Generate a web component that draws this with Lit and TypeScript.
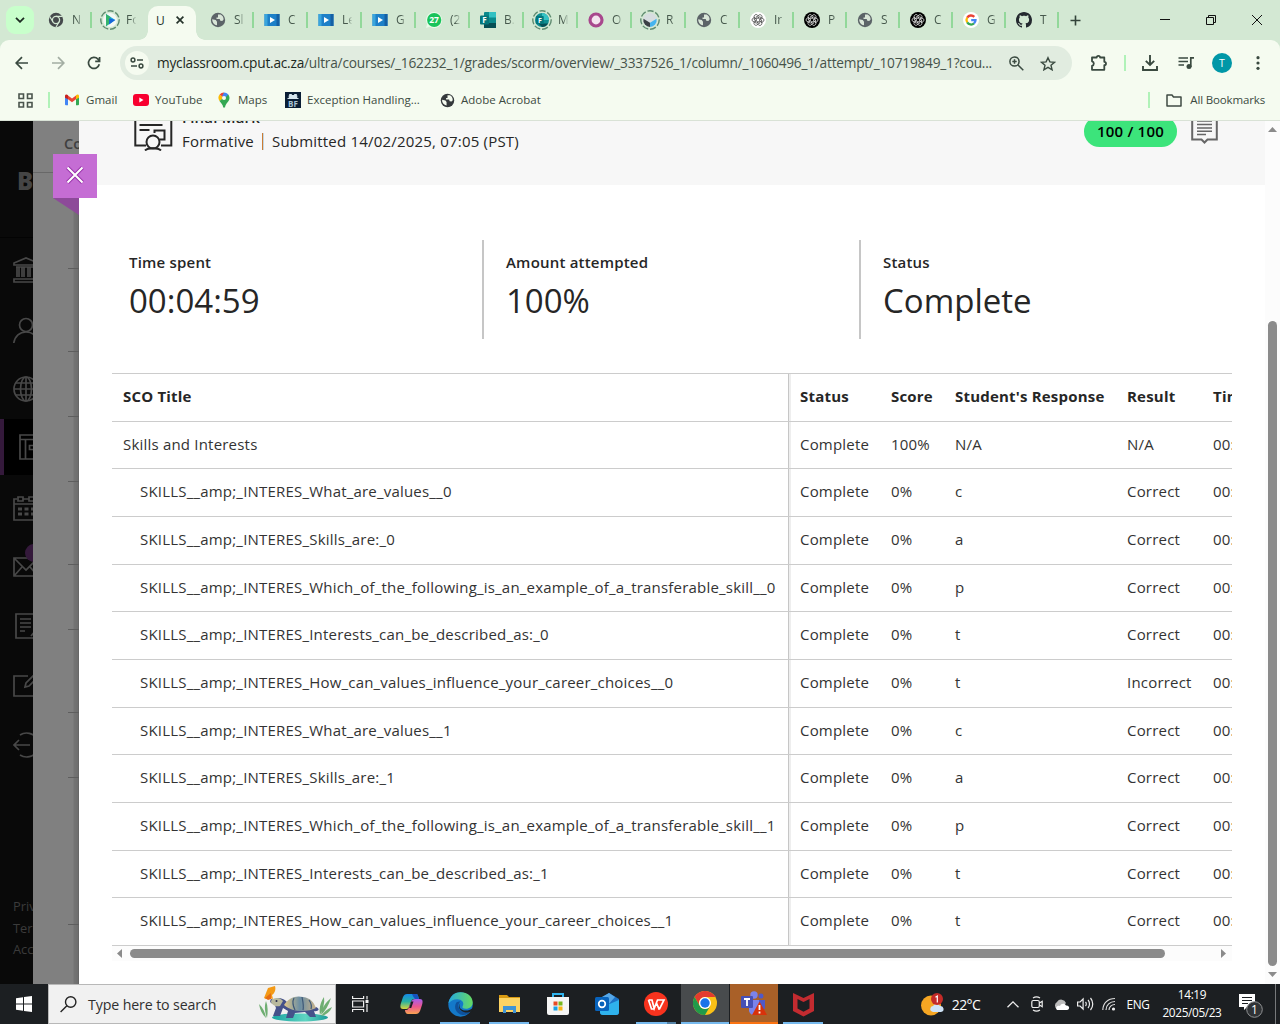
import { LitElement, html, css, svg, nothing } from "lit";
import { customElement } from "lit/decorators.js";
import { classMap } from "lit/directives/class-map.js";
import { styleMap } from "lit/directives/style-map.js";

const knot = (fg: string, bg: string) => svg`
  <circle cx="8" cy="8" r="8" fill=${bg}/>
  <g fill="none" stroke=${fg} stroke-width=".85" transform="translate(1 1) scale(.875)">
    ${[0, 60, 120, 180, 240, 300].map(
      (a) => svg`<path transform="rotate(${a} 8 8)" d="M8 5.6V3.900a2.300 2.300 0 0 1 3.400-1.700c1.200.7 1.500 2 1 3.100M5.900 6.800V4.400L8.800 2.800"/>`
    )}
    <path d="M8 5.7l2 1.150v2.300l-2 1.150-2-1.150v-2.300z"/>
  </g>`;

const globe = (c: string, land: string) => svg`
  <circle cx="8" cy="8" r="7.200" fill=${c}/>
  <path d="M2.200 7.200l3.600.9 1.200 1.600v3.600a5.600 5.600 0 0 1-4.800-6.100zM8 2.500h2.600c2 1 3 2.700 3 5.100l-1.300 1.500-2-.4-.6-1.700H6.500V5.400H8z" fill=${land}/>`;

const video = svg`
  <rect x=".5" y="2" width="15" height="12" fill="#1d80c8"/>
  <path d="M.5 2h3v12h-3z" fill="#3aa5dc"/><path d="M12.500 2h3v12h-3z" fill="#1560a4"/>
  <path d="M6 5l5 3-5 3z" fill="#fff"/>`;

const forms = svg`
  <rect x="4" y="0" width="12" height="16" rx="1" fill="#0b8a8c"/>
  <rect x="9" y="0" width="7" height="5.500" fill="#33c1c3"/>
  <rect x="4" y="11" width="12" height="5" fill="#064f55"/>
  <rect x="0" y="3.500" width="9" height="9" rx="1" fill="#04777c"/>
  <text x="2.300" y="11" font-size="8" font-weight="700" fill="#fff">F</text>`;

const formsRound = svg`
  <circle cx="8" cy="8" r="8" fill="#0f8f92"/><path d="M8 0a8 8 0 0 1 8 8H8z" fill="#35c3c5"/><path d="M8 16a8 8 0 0 0 7-4H4z" fill="#064f55"/>
  <rect x="1" y="3.500" width="9" height="9" rx="1" fill="#04777c"/>
  <text x="3.300" y="11" font-size="8" font-weight="700" fill="#fff">F</text>`;

const dashed = svg`<circle cx="10" cy="10" r="9.200" fill="none" stroke="#5f8b70" stroke-width="1.400" stroke-dasharray="6.200 1.900"/>`;

const fav: Record<string, unknown> = {
  chrome: svg`<circle cx="8" cy="8" r="7.200" fill="#45494c"/><circle cx="8" cy="8" r="3.600" fill="none" stroke="#d3e8d3" stroke-width="1.300"/>
    <path d="M8 4.400h6.500M4.900 9.800L1.700 4.500M11.100 9.800l-3.200 5.400" stroke="#d3e8d3" stroke-width="1.200" fill="none"/>`,
  play: svg`<circle cx="8" cy="8" r="8" fill="#f3f8f4"/><path d="M3.500 1l10.500 7-10.500 7z" fill="#18a9e6"/><path d="M3.500 1l5 3.500V11l-5 4z" fill="#35b56a"/><path d="M7 6l7 2-7 5z" fill="#1766d8"/>`,
  globe: globe("#5c6468", "#d9e6d8"),
  video,
  whats: svg`<path d="M8 0a8 8 0 1 1-4.200 14.800L0 16l1.200-3.900A8 8 0 0 1 8 0z" fill="#e9fbe9"/><circle cx="8.200" cy="8" r="7.100" fill="#19c35a"/>
    <text x="8.100" y="11" text-anchor="middle" font-size="8.500" font-weight="700" fill="#fff">27</text>`,
  forms,
  formsRound,
  ring: svg`<circle cx="8" cy="8" r="6" fill="#f4e4ef" stroke="#a8478d" stroke-width="3.200"/>`,
  sphere: svg`<circle cx="8" cy="8" r="8" fill="#d7dde0"/><path d="M.500 6.500L8 11v5A8 8 0 0 1 .500 6.500z" fill="#3b4045"/><path d="M15.500 6.500L8 11v5a8 8 0 0 0 7.500-9.500z" fill="#45b4ee"/>`,
  gptLight: knot("#444", "#fff"),
  gptDark: knot("#eee", "#000"),
  google: svg`<circle cx="8" cy="8" r="8" fill="#fff"/><g fill="none" stroke-width="2.300">
    <path d="M4.200 5.600A4.500 4.500 0 0 1 11.300 4.900" stroke="#ea4335"/><path d="M4.200 10.400a4.600 4.600 0 0 1 0-4.800" stroke="#fbbc05"/>
    <path d="M11 11.400a4.500 4.500 0 0 1-6.800-1" stroke="#34a853"/><path d="M8.200 8.200h4.300a4.500 4.500 0 0 1-1.500 3.200" stroke="#4285f4"/></g>`,
  github: svg`<path fill="#24292f" d="M8 0C3.580 0 0 3.580 0 8c0 3.540 2.290 6.530 5.470 7.590.4.070.55-.17.55-.38 0-.19-.01-.82-.01-1.490-2.010.37-2.530-.49-2.690-.94-.09-.23-.48-.94-.82-1.130-.28-.15-.68-.52-.01-.53.63-.01 1.080.58 1.230.82.72 1.210 1.870.87 2.330.66.07-.52.28-.87.51-1.070-1.780-.2-3.640-.89-3.640-3.950 0-.87.31-1.590.82-2.150-.08-.2-.36-1.020.08-2.120 0 0 .67-.21 2.200.82.64-.18 1.320-.27 2-.27s1.360.09 2 .27c1.530-1.040 2.200-.82 2.200-.82.44 1.100.16 1.920.08 2.120.51.56.82 1.270.82 2.150 0 3.070-1.870 3.750-3.650 3.950.29.25.54.73.54 1.480 0 1.070-.01 1.930-.01 2.200 0 .21.15.46.55.38A8.010 8.010 0 0 0 16 8c0-4.420-3.580-8-8-8z"/>`,
};

const tabs: { t: string; i: string; ring?: boolean; w?: number; active?: boolean }[] = [
  { t: "N", i: "chrome" },
  { t: "Fo", i: "play", ring: true },
  { t: "U", i: "", active: true },
  { t: "Sl", i: "globe" },
  { t: "C", i: "video" },
  { t: "Le", i: "video" },
  { t: "G", i: "video" },
  { t: "(2", i: "whats" },
  { t: "B.", i: "forms" },
  { t: "M", i: "formsRound", ring: true },
  { t: "O", i: "ring" },
  { t: "R", i: "sphere", ring: true },
  { t: "C", i: "globe" },
  { t: "Ir", i: "gptLight" },
  { t: "P", i: "gptDark", w: 53 },
  { t: "S", i: "globe", w: 53 },
  { t: "C", i: "gptDark", w: 53 },
  { t: "G", i: "google", w: 53 },
  { t: "T", i: "github", w: 53 },
];

@customElement("browser-chrome")
class BrowserChrome extends LitElement {
  static styles = css`
    :host { display: block; height: 121px; background: #d3e8d3; font-family: "Open Sans", "Noto Sans", sans-serif; color: #3c4a41; }
    svg { display: block; flex: none; }
    .strip { display: flex; height: 40px; align-items: center; }
    .drop { width: 28px; height: 28px; border-radius: 9px; background: #c8ffcb; margin: 0 4px 0 6px; display: grid; place-items: center; }
    .tab { width: 54px; height: 16px; box-sizing: border-box; border-right: 2px solid #92d89a; display: flex; align-items: center; padding-left: 10px; }
    .tab.w53 { width: 53px; }
    .tab.bare { border-color: transparent; }
    .ico { width: 16px; display: grid; place-items: center; }
    .ico svg { margin: 0 -2px; }
    .lbl { margin-left: 8px; width: 10px; overflow: hidden; white-space: nowrap; font-size: 12px; line-height: 16px; color: #46584c;
      -webkit-mask-image: linear-gradient(90deg, #000 50%, transparent 105%); }
    .tab.active { width: 66px; height: 34px; margin: 6px -6px 0 -6px; padding: 0; border: 0; align-self: flex-end; flex: none; }
    .active-in { width: 48px; height: 34px; background: #f5fbf0; border-radius: 10px 10px 0 0; margin: 0 auto; display: flex; align-items: center; gap: 12px; padding: 0 0 6px 8px; box-sizing: border-box; font-size: 12px; color: #26332b; position: relative; left: -1px; }
    .active-in::before, .active-in::after { content: ""; position: absolute; bottom: 0; width: 9px; height: 9px; }
    .active-in::before { left: -9px; background: radial-gradient(circle at 0 0, transparent 8.500px, #f5fbf0 9px); }
    .active-in::after { right: -9px; background: radial-gradient(circle at 100% 0, transparent 8.500px, #f5fbf0 9px); }
    .u { width: 8px; }
    .plus { margin-left: 11px; }
    .win { margin-left: auto; display: flex; }
    .win span { width: 46px; display: grid; place-items: center; }
    .tools { background: #f5fbf0; border-radius: 9px 9px 0 0; height: 46px; display: flex; align-items: center; padding: 0 4px; box-sizing: border-box; }
    .btn { width: 36px; display: grid; place-items: center; flex: none; }
    .omni { margin: 0 8px; height: 34px; border-radius: 17px; background: #e1ece0; flex: 1; min-width: 0; display: flex; align-items: center; padding: 0 8px 0 5px; }
    .site { width: 24px; height: 24px; border-radius: 50%; background: #f5fbf0; display: grid; place-items: center; margin-right: 8px; flex: none; }
    .url { flex: 1; white-space: nowrap; font-size: 13.700px; letter-spacing: -0.230px; color: #46534a; min-width: 0; padding-bottom: 2px; }
    .url b { font-weight: 400; color: #1c2820; }
    .small { width: 32px; display: grid; place-items: center; flex: none; }
    .sep { width: 2px; height: 16px; background: #b0f2b8; margin: 0 7px; flex: none; }
    .sep.first { margin: 0 14px 0 15px; }
    .btn.ext { padding-left: 2px; box-sizing: border-box; }
    .sep.mid { margin: 0 6px 0 8px; }
    .ava { width: 20px; height: 20px; border-radius: 50%; background: #0097a7; color: #fff; font-size: 10.500px; display: grid; place-items: center; }
    .marks { background: #f5fbf0; height: 28px; padding: 0 15px 6px 18px; border-bottom: 1px solid #d9e2d6; display: flex; align-items: center; font-size: 11.500px; letter-spacing: 0.020px; }
    .mark { display: flex; align-items: center; gap: 6px; white-space: nowrap; flex: none; }
    .mark span { line-height: 16px; padding-bottom: 1px; }
    .mark .sep { padding: 0; }
    .m1 { width: 69px; } .m2 { width: 85px; } .m3 { width: 67px; gap: 8px; } .m4 { width: 155px; }
    .all { margin-left: auto; letter-spacing: -0.150px; gap: 7px; }
    .all .sep { margin: 0 9px 0 0; }
  `;

  render() {
    return html`
      <div class="strip">
        <div class="drop"><svg width="10" height="6" viewBox="0 0 10 6"><path d="M1 .8l4 4 4-4" fill="none" stroke="#1d2b22" stroke-width="1.800"/></svg></div>
        ${tabs.map((tab, n) =>
          tab.active
            ? html`<div class="tab active"><div class="active-in"><span class="u">${tab.t}</span>
                <svg width="8" height="8" viewBox="0 0 8 8"><path d="M.6.600l6.800 6.800M7.400.600L.6 7.400" stroke="#26332b" stroke-width="1.700"/></svg></div></div>`
            : html`<div class=${classMap({ tab: true, w53: tab.w === 53, bare: n === 1 })}>
                <span class="ico">${tab.ring
                  ? html`<svg width="20" height="20" viewBox="0 0 20 20">${dashed}<g transform="translate(3 3) scale(.875)">${fav[tab.i]}</g></svg>`
                  : html`<svg width="16" height="16" viewBox="0 0 16 16">${fav[tab.i]}</svg>`}</span>
                <span class="lbl">${tab.t}</span></div>`
        )}
        <svg class="plus" width="11" height="11" viewBox="0 0 11 11"><path d="M5.500.5v10M.5 5.500h10" stroke="#33443a" stroke-width="1.600"/></svg>
        <div class="win">
          <span><svg width="10" height="10" viewBox="0 0 10 10"><path d="M0 4.500h10" stroke="#111"/></svg></span>
          <span><svg width="10" height="10" viewBox="0 0 10 10"><path d="M.5 2.500h7v7h-7zM2.500 2.500v-2h7v7h-2" fill="none" stroke="#111"/></svg></span>
          <span><svg width="10" height="10" viewBox="0 0 10 10"><path d="M0 0l10 10M10 0L0 10" stroke="#111"/></svg></span>
        </div>
      </div>
      <div class="tools">
        <span class="btn"><svg width="14" height="14" viewBox="0 0 14 14"><path d="M13 7H1.500M7 1.200L1.200 7 7 12.800" fill="none" stroke="#3a4a40" stroke-width="1.700"/></svg></span>
        <span class="btn"><svg width="14" height="14" viewBox="0 0 14 14"><path d="M1 7h11.500M7 1.200L12.800 7 7 12.800" fill="none" stroke="#a3aea3" stroke-width="1.700"/></svg></span>
        <span class="btn"><svg width="14" height="14" viewBox="0 0 14 14"><path d="M12.300 8.300A5.500 5.500 0 1 1 11 3.200l1.500 1.600M12.600 1v4.400H8.200" fill="none" stroke="#3a4a40" stroke-width="1.700"/></svg></span>
        <div class="omni">
          <span class="site"><svg width="14" height="12" viewBox="0 0 14 12"><g fill="none" stroke="#3a4a40" stroke-width="1.500"><circle cx="3" cy="3" r="1.900"/><path d="M7 3h6M1 9h6"/><circle cx="11" cy="9" r="1.900"/></g></svg></span>
          <span class="url"><b>myclassroom.cput.ac.za</b>/ultra/courses/_162232_1/grades/scorm/overview/_3337526_1/column/_1060496_1/attempt/_10719849_1?cou...</span>
          <span class="small"><svg width="15" height="15" viewBox="0 0 15 15"><g fill="none" stroke="#3a4a40" stroke-width="1.500"><circle cx="5.500" cy="5.500" r="4.600"/><path d="M9 9l5.300 5.300M3.300 5.500h4.400M5.500 3.300v4.400"/></g></svg></span>
          <span class="small"><svg width="16" height="15" viewBox="0 0 16 15"><path d="M8 1.700l1.900 4.200 4.600.4-3.500 3 1.100 4.500L8 11.400l-4.100 2.400L5 9.300l-3.500-3 4.600-.4z" fill="none" stroke="#3a4a40" stroke-width="1.400"/></svg></span>
        </div>
        <span class="btn ext"><svg width="18" height="18" viewBox="0 0 18 18"><path d="M2 3.500h4.700a1.700 1.700 0 0 1 3.400 0h4.200v4.300a1.700 1.700 0 0 1 0 3.400v4.600H2v-4a2.300 2.300 0 0 0 0-4.500z" fill="none" stroke="#3a4a40" stroke-width="1.800" stroke-linejoin="round"/></svg></span>
        <span class="sep mid"></span>
        <span class="btn"><svg width="16" height="16" viewBox="0 0 16 16"><path d="M8 0v10M3.800 5.800L8 10l4.200-4.200M1 11v4h14v-4" fill="none" stroke="#3a4a40" stroke-width="1.900"/></svg></span>
        <span class="btn"><svg width="16" height="14" viewBox="0 0 16 14"><path d="M.5 2h9.500M.5 5.500h9.500M.5 9h5.500M12.800 11V1.800H16" fill="none" stroke="#3a4a40" stroke-width="1.700"/><circle cx="11" cy="10.500" r="2.500" fill="#3a4a40"/></svg></span>
        <span class="btn"><span class="ava">T</span></span>
        <span class="btn"><svg width="4" height="14" viewBox="0 0 4 14" fill="#3a4a40"><circle cx="2" cy="1.700" r="1.600"/><circle cx="2" cy="7" r="1.600"/><circle cx="2" cy="12.300" r="1.600"/></svg></span>
      </div>
      <div class="marks">
        <svg width="15" height="15" viewBox="0 0 15 15"><path d="M1 1h4.500v4.500H1zM9.500 1H14v4.500H9.500zM1 9.500h4.500V14H1zM9.500 9.500H14V14H9.500z" fill="none" stroke="#4a544d" stroke-width="1.600"/></svg>
        <span class="sep first"></span>
        <span class="mark m1"><svg width="16" height="12" viewBox="0 0 16 12"><path d="M1 2.500l3 2.200v6.600H2a1 1 0 0 1-1-1z" fill="#4285f4"/><path d="M15 2.500l-3 2.200v6.600h2a1 1 0 0 0 1-1z" fill="#34a853"/><path d="M4 1.500l4 3.100 4-3.100v3.700L8 8.300 4 5.200z" fill="#ea4335"/><path d="M1 3.800V2c0-1.500 1.700-2 3-.7v3.900z" fill="#c5221f"/><path d="M15 3.800V2c0-1.500-1.700-2-3-.7v3.900z" fill="#fbbc04"/></svg><span>Gmail</span></span>
        <span class="mark m2"><svg width="16" height="12" viewBox="0 0 16 12"><rect width="16" height="12" rx="3" fill="#f8002f"/><path d="M6.300 3.500l4.200 2.500-4.200 2.500z" fill="#fff"/></svg><span>YouTube</span></span>
        <span class="mark m3"><svg width="12" height="16" viewBox="0 0 12 16"><path d="M1.600 2.600A5.500 5.500 0 0 0 1.500 9L6 6z" fill="#fbbc04"/><path d="M6 .5A5.500 5.500 0 0 0 1.600 2.600L6 6z" fill="#ea4335"/><path d="M11.500 6c0 4-4 5-4.500 9.500H5.200C5 12.500 3 11 1.500 9L9.900 2.200c1 1 1.600 2.300 1.600 3.800z" fill="#34a853"/><path d="M6 .5a5.500 5.500 0 0 1 4.300 2.100L7 6 4.200 4z" fill="#4285f4"/><circle cx="6" cy="6" r="2" fill="#f5fbf0"/></svg><span>Maps</span></span>
        <span class="mark m4"><svg width="16" height="16" viewBox="0 0 16 16"><rect width="16" height="16" fill="#0a1e35"/><path d="M2.500 6.500h11M4 5.500l.5-3h2L8 4l1.500-1.500h2l.5 3z" fill="#d6e6ee" stroke="#d6e6ee"/><text x="8" y="14.500" text-anchor="middle" font-size="8" font-weight="700" fill="#a9c3d2">BF</text></svg><span>Exception Handling...</span></span>
        <span class="mark"><svg width="15" height="15" viewBox="0 0 16 16">${globe("#35393c", "#f5fbf0")}</svg><span>Adobe Acrobat</span></span>
        <span class="mark all"><span class="sep"></span><svg width="16" height="13" viewBox="0 0 16 13"><path d="M1 1h5l1.500 2H15v9H1z" fill="none" stroke="#3f4b43" stroke-width="1.500" stroke-linejoin="round"/></svg><span>&hairsp;All Bookmarks</span></span>
      </div>`;
  }
}

const navIcons = [
  svg`<path d="M1 8v-2L13 1l12 5v2zM3 10h20M4 10v10M9 10v10M11 10v10M15 10v10M17 10v10M22 10v10M6 10v10M1 25v-3h24v3z"/>`,
  svg`<circle cx="13" cy="8" r="6.500"/><path d="M.8 26c1-7 6-11 12.200-11s11 4 12 11"/>`,
  svg`<circle cx="13" cy="13" r="12"/><ellipse cx="13" cy="13" rx="5.500" ry="12"/><path d="M13 1v24M1 13h24M3 7h20M3 19h20"/>`,
  svg`<path d="M1 1h24v24H1zM1 5.500h24M6.500 5.500V25M10.500 11.500h9v4h-9z"/>`,
  svg`<path d="M4 4H1v21h24V4h-3M10 4h6M1 9h24M5 2h5v4H5zM16 2h5v4h-5z"/><path d="M5 14h16M5 19h16" stroke-width="3" stroke-dasharray="4 2.500"/>`,
  svg`<path d="M1 4h24v18H1zM1 4l12 12L25 4M1 22l8-9M25 22l-8-9"/>`,
  svg`<path d="M20 25H3V1h20v14M7 6h11M7 10h11M7 14h11M7 18h5M18 23l6-7"/>`,
  svg`<path d="M15 3H1v20h20V12M12 14l1-4 9-9 3 3-9 9z"/>`,
  svg`<path d="M17 13H1M6 8l-5 5 5 5M7 3a12 12 0 0 1 17 4M7 23a12 12 0 0 0 17-4"/>`,
];

@customElement("course-backdrop")
class CourseBackdrop extends LitElement {
  static styles = css`
    :host { display: flex; height: 863px; font-family: "Open Sans", sans-serif; }
    .nav { width: 33px; background: #090909; overflow: hidden; display: flex; flex-direction: column; color: #454545; }
    .brand { height: 117px; flex: none; border-bottom: 1px solid #030303; box-sizing: border-box; padding: 44px 0 0 17px; font: 800 24px/32px "Open Sans", sans-serif; }
    .items { padding-top: 3px; }
    .item { height: 59.300px; box-sizing: border-box; display: flex; align-items: center; position: relative; padding: 0 0 0.400px 13px; }
    .on::before { content: ""; position: absolute; inset: 0 0 3.200px 0; background: #000; border-left: 4px solid #34193b; }
    .on { padding: 0 0 3px 19px; }
    .item svg { flex: none; position: relative; }
    .dot { position: absolute; left: 25px; top: 7px; width: 18px; height: 18px; border-radius: 50%; background: #34193b; }
    .foot { margin-top: auto; padding: 0 0 23px 13px; font-size: 12.800px; line-height: 21.600px; white-space: nowrap; color: #3b3b3b; }
    .under { width: 46px; background: linear-gradient(90deg, #808080 40px, #747474 41px, #6e6e6e 45px, #606060 46px); overflow: hidden; }
    .head { height: 52px; border-bottom: 1px solid #686868; box-sizing: border-box; padding: 11px 0 0 31px; font: 600 14.500px/23px "Open Sans", sans-serif; color: #3f3f3f; background: #808080; }
    .ticks { display: flex; flex-direction: column; padding-left: 35px; }
    .tick { box-sizing: border-box; border-bottom: 1px solid #5e5e5e; }
  `;
  render() {
    const gaps = [96, 83, 65, 65, 83, 65, 83, 65, 147];
    return html`
      <div class="nav">
        <div class="brand">B</div>
        <div class="items">
          ${navIcons.map((p, n) => html`<div class=${classMap({ item: true, on: n === 3 })}>
            <svg width="26" height="26" viewBox="0 0 26 26" fill="none" stroke="#484848" stroke-width="1.700">${p}</svg>
            ${n === 5 ? html`<span class="dot"></span>` : nothing}</div>`)}
        </div>
        <div class="foot">Privacy<br />Terms<br />Accessibility</div>
      </div>
      <div class="under">
        <div class="head">Co</div>
        <div class="ticks">${gaps.map((g) => html`<div class="tick" style=${styleMap({ height: g + "px" })}></div>`)}</div>
      </div>`;
  }
}

const rows: string[][] = [
  ["Skills and Interests", "100%", "N/A", "N/A"],
  ["SKILLS__amp;_INTERES_What_are_values__0", "0%", "c", "Correct"],
  ["SKILLS__amp;_INTERES_Skills_are:_0", "0%", "a", "Correct"],
  ["SKILLS__amp;_INTERES_Which_of_the_following_is_an_example_of_a_transferable_skill__0", "0%", "p", "Correct"],
  ["SKILLS__amp;_INTERES_Interests_can_be_described_as:_0", "0%", "t", "Correct"],
  ["SKILLS__amp;_INTERES_How_can_values_influence_your_career_choices__0", "0%", "t", "Incorrect"],
  ["SKILLS__amp;_INTERES_What_are_values__1", "0%", "c", "Correct"],
  ["SKILLS__amp;_INTERES_Skills_are:_1", "0%", "a", "Correct"],
  ["SKILLS__amp;_INTERES_Which_of_the_following_is_an_example_of_a_transferable_skill__1", "0%", "p", "Correct"],
  ["SKILLS__amp;_INTERES_Interests_can_be_described_as:_1", "0%", "t", "Correct"],
  ["SKILLS__amp;_INTERES_How_can_values_influence_your_career_choices__1", "0%", "t", "Correct"],
];

@customElement("attempt-panel")
class AttemptPanel extends LitElement {
  static styles = css`
    :host { display: flex; height: 863px; background: #fff; font-family: "Open Sans", "Noto Sans", sans-serif; color: #262626; font-size: 15px; letter-spacing: 0.200px; }
    svg { display: block; flex: none; }
    .main { width: 1186px; }
    .head { height: 64px; background: #f7f7f7; overflow: hidden; display: flex; align-items: flex-start; }
    .badge { margin: -10px 0 0 55px; }
    .titles { margin: -15px 0 0 9px; line-height: 24px; white-space: nowrap; flex: 1; }
    .title { font-weight: 600; height: 23px; line-height: 22px; }
    .sub { display: flex; align-items: center; }
    .bar { width: 1px; height: 17px; background: #cb7c34; border-right: 1px solid #c3d7e3; margin: 0 8px 0 8px; }
    .pill { margin-top: -5px; width: 93px; height: 31px; border-radius: 16px; background: #3ce47b; color: #000; font-weight: 600; line-height: 31px; text-align: center; }
    .note { margin: -5px 47px 0 14px; }
    .stats { display: grid; grid-template-columns: repeat(3, 377px); padding: 55px 0 0 26px; }
    .stat { height: 99px; box-sizing: border-box; padding: 10px 0 0 22px; border-left: 2px solid #c6c6c6; }
    .stat:first-child { border-color: transparent; }
    .k { font-weight: 600; line-height: 25px; }
    .v { font-size: 33px; line-height: 52px; letter-spacing: 0; }
    .table { width: 1120px; margin: 34px 0 0 33px; overflow: hidden; border-top: 1px solid #ccc; }
    .row { display: grid; grid-template-columns: 676px 103px 64px 172px 86px 60px; height: 47.667px; box-sizing: border-box; border-bottom: 1px solid #ccc; line-height: 44px; white-space: nowrap; width: 1161px; color: #333; }
    .row > :first-child { padding-left: 11px; }
    .row.deep > :first-child { padding-left: 28px; }
    .row > :nth-child(2) { border-left: 1px solid #c6c6c6; box-shadow: inset 2px 0 0 #eee; padding-left: 11px; }
    .row.hd { font-weight: 700; color: #262626; }
    .hs { width: 1120px; margin-left: 33px; height: 15px; background: #fcfcfc; display: flex; align-items: center; box-sizing: border-box; padding: 0 5px; }
    .hs i { display: block; width: 1035px; height: 9px; border-radius: 5px; background: #8b8b8b; margin: 0 56px 0 8px; }
    .vs { width: 15px; background: #fcfcfc; display: flex; flex-direction: column; align-items: center; padding: 6px 0 7px; box-sizing: border-box; }
    .vs i { display: block; width: 9px; height: 645px; border-radius: 5px; background: #8b8b8b; margin: 189px 0 6px; }
  `;
  render() {
    return html`
      <div class="main">
        <div class="head">
          <svg class="badge" width="39" height="40" viewBox="0 0 39 40" fill="none" stroke="#262626" stroke-width="2"><path d="M12 34.500H1.300V2h36v32.500H27M5.500 14h23M5.500 19h10M20.500 22v-2.500h10v9h-5"/><circle cx="19" cy="31" r="6.500" fill="#f7f7f7"/><path d="M11 39.500c2-2 5-2.200 8-2.200s6 .2 8 2.200"/></svg>
          <div class="titles">
            <div class="title">Final Mark</div>
            <div class="sub">Formative<span class="bar"></span>Submitted 14/02/2025, 07:05 (PST)</div>
          </div>
          <div class="pill">100 / 100</div>
          <svg class="note" width="27" height="28" viewBox="0 0 27 28" fill="none" stroke="#666" stroke-width="1.800"><path d="M1.200 1h24.600v22.500H16.500L13.500 26.500l-3-3H1.200z" stroke-width="2"/><path d="M6 5h15M6 8.500h15M6 12h15M6 15.200h15M6 18.500h9" stroke-width="1.600"/></svg>
        </div>
        <div class="stats">
          <div class="stat"><div class="k">Time spent</div><div class="v">00:04:59</div></div>
          <div class="stat"><div class="k">Amount attempted</div><div class="v">100%</div></div>
          <div class="stat"><div class="k">Status</div><div class="v">Complete</div></div>
        </div>
        <div class="table">
          <div class="row hd"><span>SCO Title</span><span>Status</span><span>Score</span><span>Student's Response</span><span>Result</span><span>Time</span></div>
          ${rows.map((r, n) => html`<div class=${classMap({ row: true, deep: n > 0 })}>
            <span>${r[0]}</span><span>Complete</span><span>${r[1]}</span><span>${r[2]}</span><span>${r[3]}</span><span>00:00</span></div>`)}
        </div>
        <div class="hs">
          <svg width="5" height="9" viewBox="0 0 5 9"><path d="M5 0v9L0 4.500z" fill="#8b8b8b"/></svg><i></i>
          <svg width="5" height="9" viewBox="0 0 5 9"><path d="M0 0v9l5-4.500z" fill="#8b8b8b"/></svg>
        </div>
      </div>
      <div class="vs">
        <svg width="9" height="5" viewBox="0 0 9 5"><path d="M0 5h9L4.500 0z" fill="#8b8b8b"/></svg><i></i>
        <svg width="9" height="5" viewBox="0 0 9 5"><path d="M0 0h9L4.500 5z" fill="#8b8b8b"/></svg>
      </div>`;
  }
}

const turtle = html`<svg width="76" height="36" viewBox="0 0 76 36">
  <defs>
    <linearGradient id="sh" x1="0" x2="1"><stop offset="0" stop-color="#e3c98a"/><stop offset=".5" stop-color="#6a8da3"/><stop offset="1" stop-color="#c9b28a"/></linearGradient>
    <linearGradient id="pd" x1="0" x2="1"><stop offset="0" stop-color="#1aa4a2"/><stop offset=".6" stop-color="#5fd5c2"/><stop offset="1" stop-color="#1b9a99"/></linearGradient>
  </defs>
  <ellipse cx="43" cy="31.500" rx="28" ry="4" fill="url(#pd)"/>
  <g fill="#6fae72"><path d="M2 18c4 4 6 8 7 14-4-4-6-8-7-14zM9 15c2 5 2 11 1 17-2-6-3-11-1-17zM74 12c-6 5-9 10-10 17 4-4 8-10 10-17zM67 11c-4 6-5 12-4 18 3-6 5-12 4-18zM75 21c-5 2-8 5-11 9 5-1 9-4 11-9z"/></g>
  <path d="M17 14c5-4 12-1 15 5l27 2c5 2 2 5-2 4l2 6h-6l-5-5-10 1-2 5h-7l2-7-5-3-3 8h-7l3-8-2-5c-3 1-5-1-3-4z" fill="#45528a"/>
  <path d="M14 15c2-4 9-4 12 0l-3 5c-4 1-9-1-9-5z" fill="#b8b99e"/><circle cx="19.500" cy="15" r="1" fill="#22284b"/>
  <path d="M27 19c4-7 12-10 19-8 8 1 11 6 13 11-8 4-23 5-32-3z" fill="url(#sh)"/>
  <path d="M37 12c-2 4-1 8 1 12M45 11c1 5 2 9 1 13M52 14c2 3 3 6 2 9" fill="none" stroke="#3d5878" stroke-width="1.200"/>
  <path d="M7 12l4-10 7-2c1 3 0 7-3 9l1 4-4-1-3 1z" fill="#f49a16"/><path d="M8 12l6-5v6l-3 1z" fill="#e66c13"/>
</svg>`;

const app: Record<string, unknown> = {
  task: html`<svg width="17" height="16" viewBox="0 0 17 16" fill="none" stroke="#eee" stroke-width="1.200"><path d="M.6 0v2.500h11V0M.6 16v-2.500h11V16M.6 5h11v6H.6zM15 0v3.500M15 8v8"/><path d="M13.500 4h3v3h-3z" fill="#eee" stroke="none"/></svg>`,
  copilot: html`<svg width="23" height="22" viewBox="0 0 23 22"><defs><linearGradient id="c1" x2="0" y2="1"><stop offset="0" stop-color="#1689e8"/><stop offset=".5" stop-color="#26b1a2"/><stop offset="1" stop-color="#d8d43c"/></linearGradient><linearGradient id="c2" x2="0" y2="1"><stop offset="0" stop-color="#a85dec"/><stop offset=".5" stop-color="#ec5790"/><stop offset="1" stop-color="#f9a451"/></linearGradient></defs><path d="M7 1h9c2 0 2 2 3 5h-5c-2 0-3 2-4 5l-1 3c-1 2-2 2-4 2H3c-3 0-3-3-2-6l2-6c1-2 2-3 4-3z" fill="url(#c1)"/><path d="M16 21H8c-2 0-3-2-3-4 2 0 3 0 4-3l2-5c1-2 2-3 4-3h5c3 0 3 3 2 6l-2 6c-1 2-2 3-4 3z" fill="url(#c2)"/><path d="M12 1h4c2 0 2 2 3 5h-4c-1-1-2-3-3-5z" fill="#1752bd"/><path d="M13.500 8.500l-2.300 6.500h-2l2-6.500z" fill="#1c1f22"/></svg>`,
  edge: html`<svg width="25" height="25" viewBox="0 0 24 24"><defs><linearGradient id="e1"><stop offset="0" stop-color="#25a9e0"/><stop offset="1" stop-color="#66db61"/></linearGradient></defs><circle cx="12" cy="12" r="11.700" fill="#1479c9"/><path d="M.4 11C2 3 7 .3 12 .3 19 .3 23.700 5 23.700 10c0 4-3 6-6.500 6-3 0-4-1-3-2.500C16 10 13 7 9 7 5 7 2 9 .4 11z" fill="url(#e1)"/><path d="M8 10c-3 5 0 11 6 12 3 .3 6-1 8-4-5 3-12 1-12-5 0-2 1-3 2-4-2 0-3 0-4 1z" fill="#0f529c"/><path d="M12 10.500c-1.500 2-1.500 5 1.500 6.500 3 1.500 7 1 10-1.500v3l-1.500.5c-5 2-10.500 0-11.500-4.500 0-2 .5-3 1.500-4z" fill="#1c2023"/></svg>`,
  folder: html`<svg width="23" height="20" viewBox="0 0 23 20"><path d="M1 1h8l2 2h11v5H1z" fill="#d99a12"/><path d="M1 4h21v14H1z" fill="#fcd363"/><path d="M5 19v-7h13v7h-3v-3H8v3z" fill="#3f94d6"/></svg>`,
  store: html`<svg width="24" height="24" viewBox="0 0 24 24"><path d="M7 6V2h10v4" fill="none" stroke="#30b4ee" stroke-width="2"/><path d="M1 5h22v16a2 2 0 0 1-2 2H3a2 2 0 0 1-2-2z" fill="#f5f5f5"/><path d="M7.500 9.500h4v4h-4z" fill="#e84b24"/><path d="M12.500 9.500h4v4h-4z" fill="#78b81c"/><path d="M7.500 14.500h4v4h-4z" fill="#18a1e5"/><path d="M12.500 14.500h4v4h-4z" fill="#f9b515"/></svg>`,
  outlook: html`<svg width="25" height="24" viewBox="0 0 25 24"><path d="M5 7l9-6 10 6v13a3 3 0 0 1-3 3H8a3 3 0 0 1-3-3z" fill="#1c72c5"/><path d="M5 16L24 8v12a3 3 0 0 1-3 3H8a3 3 0 0 1-3-3z" fill="#2fb2ec"/><path d="M5 6l9-5 6 4-8 9z" fill="#55a7e8"/><rect y="5" width="14" height="14" rx="1.500" fill="#0863bc"/><circle cx="7" cy="12" r="3.300" fill="none" stroke="#fff" stroke-width="1.700"/></svg>`,
  wps: html`<svg width="24" height="24" viewBox="0 0 24 24"><circle cx="12" cy="12" r="12" fill="#f8331e"/><path d="M4.500 8H8l2.200 8.500L13.500 8H20l-4.500 9H14M4.500 8l3 9h2.700M12.500 11l2.500 6" fill="none" stroke="#fff" stroke-width="1.700"/></svg>`,
  chrome: html`<svg width="24" height="24" viewBox="0 0 24 24"><circle cx="12" cy="12" r="12" fill="#fbc116"/><path d="M1.600 6A12 12 0 0 1 22.400 6H12a6 6 0 0 0-5.200 9z" fill="#e33b2e"/><path d="M1.600 6A12 12 0 0 0 12 24l5.200-9A6 6 0 0 1 6.800 15z" fill="#219a4a"/><circle cx="12" cy="12" r="6" fill="#fff"/><circle cx="12" cy="12" r="4.700" fill="#1b73e8"/></svg>`,
  teams: html`<svg width="26" height="24" viewBox="0 0 26 24"><circle cx="13" cy="4" r="3.700" fill="#7b83eb"/><circle cx="20" cy="5" r="2.500" fill="#5059c9"/><path d="M8 9h10v9a5 5 0 0 1-10 2z" fill="#7b83eb"/><path d="M18 9h6v7c0 3-3 5-6 4z" fill="#5059c9"/><rect y="5" width="12" height="12" rx="1" fill="#4650b6"/><path d="M3 8h6M6 8v7" stroke="#fff" stroke-width="1.800"/><path d="M18.500 10.500L26 24H11z" fill="#d8320b"/><path d="M18.500 14v5M18.500 20.500v2" stroke="#fff" stroke-width="1.800"/></svg>`,
  mcafee: html`<svg width="23" height="25" viewBox="0 0 23 25"><path d="M1 1l10.500 5L22 1v18l-10.500 5.500L1 19zM5.500 7v9.500l6 3.200 6-3.200V7l-6 3z" fill="#c32b30" fill-rule="evenodd"/></svg>`,
};

@customElement("task-bar")
class TaskBar extends LitElement {
  static styles = css`
    :host { display: flex; height: 40px; background: #1c1f22; color: #fff; font-family: "Open Sans", "Noto Sans", sans-serif; }
    svg { display: block; flex: none; }
    .start { width: 48px; display: grid; place-items: center; }
    .search { width: 288px; height: 40px; box-sizing: border-box; border: 1px solid #b8b8b8; background: #f1f1f1; color: #303030; display: flex; align-items: center; padding: 0 2px 0 11px; font-size: 14.200px; letter-spacing: -0.120px; }
    .search span { flex: 1; padding-left: 11px; white-space: nowrap; }
    .app { width: 49px; box-sizing: border-box; display: grid; place-items: center; position: relative; padding-left: 1px; }
    .app.task { width: 48px; margin-right: 2px; padding: 0; }
    .open::after { content: ""; position: absolute; bottom: 0; left: 5px; width: 40px; height: 2px; background: #76b9ed; }
    .multi::after { background: linear-gradient(90deg, #76b9ed 31px, #5582a5 31px); }
    .app.cur, .app.alert { width: 48px; margin-left: 1px; padding: 0; background: #484b4d; border-bottom: 2px solid #76b9ed; }
    .app.alert { background: #a96028; border-color: #fb7312; }
    .tray { margin-left: auto; display: flex; align-items: center; font-size: 12px; }
    .t { display: grid; place-items: center; white-space: nowrap; }
    .temp { width: 30px; font-size: 14px; letter-spacing: -0.600px; margin: 0 20px 0 7px; }
    .i { width: 24px; }
    .eng { width: 30px; font-size: 11.800px; letter-spacing: -0.350px; margin-left: 2px; }
    .clock { width: 62px; font-size: 11.800px; line-height: 18px; letter-spacing: -0.360px; text-align: center; margin: 0 15px 2px 8px; }
    .edge { width: 1px; height: 40px; background: #77797b; margin: 0 4px 0 12px; }
    .bell { margin-left: 1px; position: relative; top: 1px; }
  `;
  render() {
    const cls: Record<string, string> = { task: "task", edge: "open", folder: "open", wps: "open multi", chrome: "cur", teams: "alert", mcafee: "open" };
    return html`
      <div class="start"><svg width="16" height="16" viewBox="0 0 16 16" fill="#fff"><path d="M0 2.200l7-1v6.300H0zM8 1l8-1v7.500H8zM0 8.500h7v6.300l-7-1zM8 8.500h8V16l-8-1.100z"/></svg></div>
      <div class="search"><svg width="17" height="17" viewBox="0 0 17 17" fill="none" stroke="#222" stroke-width="1.400"><circle cx="10.700" cy="6" r="5.200"/><path d="M6.900 9.800L.6 16"/></svg><span>Type here to search</span>${turtle}</div>
      ${Object.keys(app).map((k) => html`<div class="app ${cls[k] ?? ""}">${app[k]}</div>`)}
      <div class="tray">
        <svg width="23" height="23" viewBox="0 0 23 23"><circle cx="10" cy="12.500" r="10" fill="#f6a623"/><path d="M10 18a3 3 0 0 1 2-5 4 4 0 0 1 7 0 3 3 0 0 1 1 6h-8z" fill="#cfe3f7"/><circle cx="16" cy="6" r="6" fill="#c42b28"/><path d="M14.500 4.200L16.300 3v6.500" fill="none" stroke="#fff" stroke-width="1.200"/></svg>
        <span class="t temp">22°C</span>
        <span class="t i"><svg width="12" height="7" viewBox="0 0 12 7"><path d="M.5 6.300L6 .9l5.500 5.400" fill="none" stroke="#eee" stroke-width="1.300"/></svg></span>
        <span class="t i"><svg width="12" height="16" viewBox="0 0 12 16" fill="none" stroke="#eee" stroke-width="1.200"><rect x=".8" y="4.500" width="7.500" height="7" rx="1.500"/><path d="M8.500 7l2.700-1.700v5.400L8.500 9M2 2c2-1.300 5-1.300 7 0M2 14c2 1.300 5 1.300 7 0"/></svg></span>
        <span class="t i"><svg width="17" height="11" viewBox="0 0 17 11"><path d="M4 10a4 4 0 0 1 0-7 5 5 0 0 1 9 1l-5 6z" fill="#bbb"/><path d="M4 11c-2-2 0-5 3-4 1-3 5-3 6-.500 4-.500 4 4.500 1 4.500z" fill="#fff"/></svg></span>
        <span class="t i"><svg width="17" height="14" viewBox="0 0 17 14" fill="none" stroke="#eee" stroke-width="1.200"><path d="M.6 5v4h2.500l3 3V2l-3 3zM8.500 5c1 1 1 3 0 4M11 3c2 2 2 6 0 8M13.500 1c3 3.500 3 8.500 0 12"/></svg></span>
        <span class="t i"><svg width="14" height="14" viewBox="0 0 14 14" fill="none" stroke="#ddd" stroke-width="1.200"><path d="M.8 13C1 6 6 1.500 13 1.500M4 13c0-5 4-8.500 9-8.500M7 13c0-3 2.500-5.500 6-5.500"/><circle cx="11.500" cy="12" r="1.600" fill="#eee" stroke="none"/></svg></span>
        <span class="t eng">ENG</span>
        <div class="clock">14:19<br />2025/05/23</div>
        <svg class="bell" width="24" height="25" viewBox="0 0 24 25"><path d="M0 1h16v13H8l-3 3v-3H0z" fill="#fff"/><path d="M3 4.500h10M3 7.500h10M3 10.500h6" stroke="#1c1f22" stroke-width="1.200"/><circle cx="15.500" cy="16.500" r="7.800" fill="#303336" stroke="#909294"/><text x="15.500" y="21" text-anchor="middle" font-size="12" fill="#fff">1</text></svg>
        <span class="edge"></span>
      </div>`;
  }
}

@customElement("app-root")
class AppRoot extends LitElement {
  static styles = css`
    :host { display: block; width: 1280px; height: 1024px; overflow: hidden; position: relative; }
    .page { display: flex; }
    attempt-panel { flex: 1; }
    .close { position: absolute; left: 53px; top: 154px; width: 44px; height: 44px; background: #c56dd4; display: grid; place-items: center; }
    .close svg { margin-top: -2px; }
    .close::after { content: ""; position: absolute; left: 0; top: 44px; width: 26px; height: 17px; background: #8d4a99; clip-path: polygon(0 0, 100% 0, 100% 100%); }
  `;
  render() {
    return html`
      <browser-chrome></browser-chrome>
      <div class="page">
        <course-backdrop></course-backdrop>
        <attempt-panel></attempt-panel>
      </div>
      <task-bar></task-bar>
      <div class="close"><svg width="20" height="20" viewBox="0 0 20 20"><path d="M2.500 2.500l15 15M17.500 2.500l-15 15" stroke="#9a35ab" stroke-width="4"/><path d="M2.500 2.500l15 15M17.500 2.500l-15 15" stroke="#fff" stroke-width="2"/></svg></div>`;
  }
}
